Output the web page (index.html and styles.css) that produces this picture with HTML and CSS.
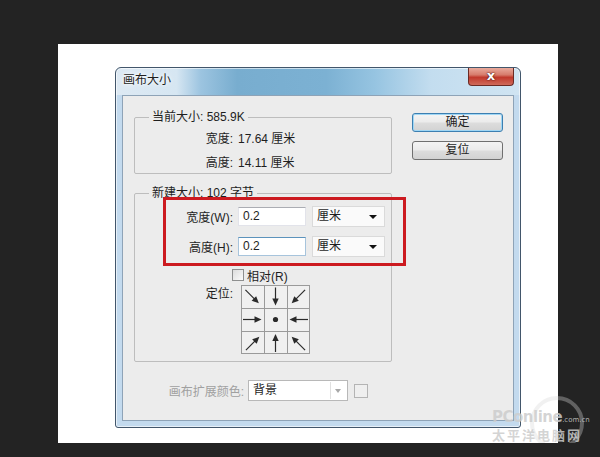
FILE: index.html
```html
<!DOCTYPE html>
<html lang="zh-CN">

<head>
    <meta charset="UTF-8">
    <meta name="viewport" content="width=device-width, initial-scale=1.0">
    <title>画布大小</title>
    <link rel="stylesheet" href="styles.css">
</head>

<body>
    <div class="canvas">
        <div class="dialog">
            <div class="titlebar">
                <span class="title">画布大小</span>
                <div class="close-btn">x</div>
            </div>

            <div class="client">
                <div class="top-part">
                    <div class="groups">
                        <fieldset class="group group-current">
                            <legend>当前大小: 585.9K</legend>
                            <div class="info-row">
                                <span class="label">宽度:</span>
                                <span class="value">17.64 厘米</span>
                            </div>
                            <div class="info-row">
                                <span class="label">高度:</span>
                                <span class="value">14.11 厘米</span>
                            </div>
                        </fieldset>

                        <fieldset class="group group-new">
                            <legend>新建大小: 102 字节</legend>
                            <div class="field-row">
                                <span class="label">宽度(W):</span>
                                <div class="text-input">0.2</div>
                                <div class="select-box">厘米<span class="caret"></span></div>
                            </div>
                            <div class="field-row second">
                                <span class="label">高度(H):</span>
                                <div class="text-input focused">0.2</div>
                                <div class="select-box">厘米<span class="caret"></span></div>
                            </div>
                            <div class="check-row">
                                <span class="checkbox"></span>
                                <span>相对(R)</span>
                            </div>
                            <div class="anchor-row">
                                <span class="label">定位:</span>
                                <svg class="anchor-grid" width="69" height="69" viewBox="0 0 69 69">
                                    <rect x="0.5" y="0.5" width="68" height="68" fill="#f0f0f0" stroke="#9a9a9a" />
                                    <path d="M23.5 0V69M46.5 0V69M0 23.5H69M0 46.5H69" stroke="#9a9a9a" />
                                    <g fill="#2a2a2a" stroke="#2a2a2a" stroke-width="1.2">
                                        <g transform="translate(11.5 12) rotate(45)"><path d="M-10 0H3" /><path d="M2 -3.2L9 0L2 3.2Z" stroke="none" /></g>
                                        <g transform="translate(34.5 11.5) rotate(90)"><path d="M-9 0H3" /><path d="M2 -3.2L9 0L2 3.2Z" stroke="none" /></g>
                                        <g transform="translate(57 12) rotate(135)"><path d="M-10 0H3" /><path d="M2 -3.2L9 0L2 3.2Z" stroke="none" /></g>
                                        <g transform="translate(11.5 34.5)"><path d="M-9.5 0H3" /><path d="M2 -3.2L9 0L2 3.2Z" stroke="none" /></g>
                                        <g transform="translate(57.5 34.5) rotate(180)"><path d="M-9.5 0H3" /><path d="M2 -3.2L9 0L2 3.2Z" stroke="none" /></g>
                                        <g transform="translate(12 58) rotate(-45)"><path d="M-10 0H3" /><path d="M2 -3.2L9 0L2 3.2Z" stroke="none" /></g>
                                        <g transform="translate(34.5 58) rotate(-90)"><path d="M-9 0H3" /><path d="M2 -3.2L9 0L2 3.2Z" stroke="none" /></g>
                                        <g transform="translate(57 58) rotate(-135)"><path d="M-10 0H3" /><path d="M2 -3.2L9 0L2 3.2Z" stroke="none" /></g>
                                        <circle cx="34.5" cy="34.5" r="2.6" stroke="none" />
                                    </g>
                                </svg>
                            </div>
                        </fieldset>
                    </div>

                    <div class="side-buttons">
                        <div class="btn btn-default">确定</div>
                        <div class="btn">复位</div>
                    </div>
                </div>

                <div class="bottom-row">
                    <span class="bottom-label">画布扩展颜色:</span>
                    <div class="select-box disabled">背景<span class="sep"></span><span class="caret"></span></div>
                    <span class="swatch"></span>
                </div>
            </div>

            <!-- red annotation box -->
            <div class="highlight"></div>
        </div>

        <div class="watermark">
            <div class="wm-ring"></div>
            <div class="wm-logo">PConline<span class="wm-domain">.com.cn</span></div>
            <div class="wm-cn">太平洋电脑网</div>
        </div>
    </div>
</body>

</html>
```

FILE: styles.css
```css
:root {
    --frame-blue: #c3daee;
    --group-line: #bdbdbd;
    --client-bg: #ececec;
}

html,
body {
    margin: 0;
    padding: 0;
    background-color: #232323;
    font-family: "Liberation Sans", "Noto Sans CJK SC", sans-serif;
    font-size: 12px;
    color: #1e1e1e;
}

.canvas {
    position: relative;
    margin: 44px 0 0 58px;
    width: 500px;
    height: 399px;
    background-color: #fff;
    padding: 23px 0 0 57px;
    box-sizing: border-box;
}

.dialog {
    position: relative;
    width: 406px;
    height: 361px;
    box-sizing: border-box;
    border: 1px solid #42566b;
    border-radius: 6px 6px 3px 3px;
    padding: 0 6px 6px 6px;
    background:
        linear-gradient(90deg, #dde9f3 0%, #d6e6f2 15%, #9cc4e0 21%, #78adcf 30%, #7cb1d3 52%, #96c4e1 64%, #c3ddef 78%, #d0e4f2 100%) top / 100% 27px no-repeat,
        var(--frame-blue);
    box-shadow: inset 0 0 0 1px rgba(255, 255, 255, 0.6);
}

.titlebar {
    height: 27px;
    display: flex;
    justify-content: space-between;
    align-items: flex-start;
}

.title {
    line-height: 24px;
    padding-left: 1px;
    text-shadow: 0 0 6px #fff, 0 0 3px #fff;
}

.close-btn {
    width: 44px;
    height: 17px;
    border: 1px solid #6b2a24;
    border-top: 0;
    border-radius: 0 0 4px 4px;
    background: linear-gradient(#e9aa9c 0%, #d77c6c 40%, #c1392c 55%, #cf6a5a 100%);
    color: #fff;
    font-family: "DejaVu Sans", sans-serif;
    font-weight: bold;
    font-size: 13px;
    line-height: 15px;
    text-align: center;
    text-shadow: 0 0 2px #4a1510, 0 0 1px #4a1510;
}

.client {
    height: 326px;
    box-sizing: border-box;
    border: 1px solid #8ea3b7;
    background-color: var(--client-bg);
    padding: 14px 10px 0 11px;
}

.top-part {
    display: flex;
    align-items: flex-start;
}

.groups {
    width: 258px;
}

.group {
    margin: 0;
    padding: 0;
    border: 1px solid var(--group-line);
    border-radius: 2px;
    min-width: 0;
}

.group legend {
    margin-left: 14px;
    padding: 0 3px;
    line-height: 14px;
}

.group-current {
    padding: 3px 0 2px 0;
}

.info-row {
    display: flex;
    height: 20px;
    align-items: center;
    margin-bottom: 4px;
}

.info-row:last-child {
    margin-bottom: 0;
}

.label {
    width: 98px;
    text-align: right;
    flex-shrink: 0;
}

.info-row .value {
    margin-left: 5px;
}

.group-new {
    margin-top: 12px;
    padding: 6px 0 7px 0;
}

.field-row {
    display: flex;
    align-items: center;
    height: 21px;
}

.field-row.second {
    margin-top: 9px;
}

.text-input {
    margin-left: 5px;
    width: 68px;
    height: 19px;
    box-sizing: border-box;
    background-color: #fff;
    border: 1px solid #e2e3ea;
    border-top-color: #abadb3;
    padding-left: 4px;
    line-height: 17px;
}

.text-input.focused {
    border-color: #a7c4dc;
    border-top-color: #5c93bc;
}

.select-box {
    position: relative;
    margin-left: 6px;
    width: 73px;
    height: 21px;
    box-sizing: border-box;
    border: 1px solid #dadada;
    background-color: #fafafa;
    padding-left: 4px;
    line-height: 19px;
}

.caret {
    position: absolute;
    right: 7px;
    top: 8px;
    width: 0;
    height: 0;
    border-left: 4px solid transparent;
    border-right: 4px solid transparent;
    border-top: 4px solid #111;
}

.check-row {
    display: flex;
    align-items: center;
    height: 14px;
    margin-top: 11px;
    padding-left: 97px;
}

.checkbox {
    width: 12px;
    height: 12px;
    box-sizing: border-box;
    border: 1px solid #8e8f8f;
    background: linear-gradient(135deg, #dcdcdc, #fbfbfb);
    margin-right: 3px;
}

.anchor-row {
    display: flex;
    align-items: flex-start;
    margin-top: 3px;
}

.anchor-row .label {
    line-height: 18px;
}

.anchor-grid {
    display: block;
    margin-left: 8px;
}

.side-buttons {
    margin-left: 20px;
    margin-top: 3px;
    display: flex;
    flex-direction: column;
    gap: 9px;
}

.btn {
    width: 91px;
    height: 19px;
    box-sizing: border-box;
    border: 1px solid #707070;
    border-radius: 3px;
    background: linear-gradient(#f4f4f4 0%, #ebebeb 48%, #dddddd 52%, #d2d2d2 100%);
    text-align: center;
    line-height: 17px;
}

.btn-default {
    border-color: #3c7fb1;
    box-shadow: inset 0 0 0 1px #9fd6f4;
}

.bottom-row {
    display: flex;
    align-items: center;
    margin-top: 18px;
}

.bottom-label {
    width: 110px;
    text-align: right;
    color: #a0a0a0;
}

.select-box.disabled {
    margin-left: 4px;
    width: 100px;
    border-color: #b8b8b8;
    background-color: #fff;
}

.select-box.disabled .sep {
    position: absolute;
    left: 81px;
    top: 1px;
    bottom: 1px;
    border-left: 1px solid #e0e0e0;
}

.select-box.disabled .caret {
    border-top-color: #a8a8a8;
    border-left-width: 3px;
    border-right-width: 3px;
    right: 6px;
}

.swatch {
    margin-left: 6px;
    width: 14px;
    height: 14px;
    box-sizing: border-box;
    border: 1px solid #b4b4b4;
    background-color: #efefef;
}

.highlight {
    position: absolute;
    left: 47px;
    top: 129px;
    width: 243px;
    height: 69px;
    box-sizing: border-box;
    border: 3px solid #cc1a20;
}

.watermark {
    position: absolute;
    left: 434px;
    top: 356px;
    width: 100px;
    color: rgba(205, 205, 205, 0.85);
}

.wm-ring {
    position: absolute;
    left: 38px;
    top: -4px;
    width: 46px;
    height: 46px;
    border: 4px solid rgba(215, 215, 215, 0.35);
    border-radius: 50%;
}

.wm-logo {
    position: relative;
    font-family: "DejaVu Sans", sans-serif;
    font-size: 15px;
    font-weight: bold;
    letter-spacing: -0.5px;
    line-height: 18px;
    margin-top: 8px;
    white-space: nowrap;
}

.wm-domain {
    font-size: 7px;
    font-weight: normal;
    letter-spacing: 0;
}

.wm-cn {
    position: relative;
    font-size: 13px;
    line-height: 14px;
    letter-spacing: 2px;
    font-weight: bold;
    white-space: nowrap;
}
```
